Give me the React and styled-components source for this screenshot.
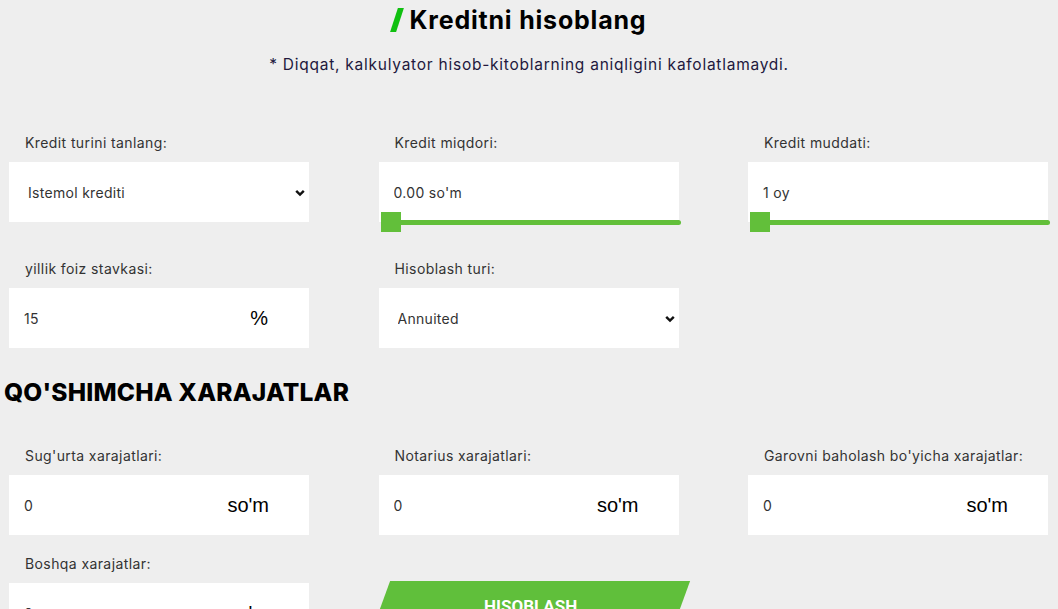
import React from "react";
import styled, { createGlobalStyle } from "styled-components";

const Global = createGlobalStyle`
  html, body { margin: 0; padding: 0; background: #eeeeee; }
  body { font-family: Inter, "Open Sans", "Noto Sans", sans-serif; color: #333; overflow: hidden; }
  * { box-sizing: border-box; }
`;

const Page = styled.div`
  width: 1058px;
  height: 609px;
  overflow: hidden;
  padding: 0 4px;
`;

const Header = styled.header`
  display: flex;
  flex-direction: column;
  align-items: center;
  padding-top: 4px;
`;

const Title = styled.h1`
  margin: 0 18px 0 0;
  display: flex;
  align-items: center;
  gap: 10px;
  font-size: 25px;
  line-height: 32px;
  font-weight: 700;
  letter-spacing: 0.8px;
  color: #000;
`;

const Slash = styled.span`
  display: inline-block;
  width: 6px;
  height: 24px;
  background: #10c010;
  transform: skewX(-18deg);
`;

const Note = styled.p`
  margin: 19px 0 0;
  font-size: 15.5px;
  line-height: 20px;
  letter-spacing: 0.75px;
  color: #22183d;
`;

const Grid = styled.div`
  display: grid;
  grid-template-columns: 300px 300px 300px;
  column-gap: 69.5px;
  row-gap: 19px;
  padding-left: 5px;
  margin-top: ${(p) => p.$top || 0}px;
`;

const Field = styled.div`
  display: flex;
  flex-direction: column;
`;

const Label = styled.label`
  display: block;
  padding-left: 16px;
  font-size: 14px;
  line-height: 20px;
  letter-spacing: 0.4px;
  margin-bottom: 9px;
  color: #333;
`;

const Box = styled.div`
  position: relative;
  height: 60px;
  background: #fff;
  display: flex;
  align-items: center;
`;

const TextInput = styled.input`
  flex: 1;
  min-width: 0;
  height: 100%;
  border: none;
  outline: none;
  background: transparent;
  padding: 0 0 0 15px;
  font-family: inherit;
  font-size: 14px;
  letter-spacing: 0.3px;
  color: #333;
`;

const Suffix = styled.span`
  font-family: "Liberation Sans", Arial, sans-serif;
  font-size: 20px;
  color: #000;
  margin-right: ${(p) => p.$right || 40}px;
`;

const Select = styled.select`
  appearance: none;
  -webkit-appearance: none;
  width: 100%;
  height: 100%;
  border: none;
  outline: none;
  background: transparent;
  padding: 0 0 0 19px;
  font-family: inherit;
  font-size: 14px;
  letter-spacing: 0.3px;
  color: #333;
`;

const Chevron = styled.svg`
  position: absolute;
  right: 4px;
  top: 27px;
  pointer-events: none;
`;

const Range = styled.input`
  -webkit-appearance: none;
  appearance: none;
  display: block;
  width: 300px;
  height: 20px;
  margin: -10px 0 8px 2px;
  background: transparent;
  position: relative;

  &::-webkit-slider-runnable-track {
    height: 5px;
    background: #62bf3a;
    border-radius: 3px;
  }
  &::-webkit-slider-thumb {
    -webkit-appearance: none;
    width: 20px;
    height: 20px;
    margin-top: -8px;
    background: #62bf3a;
    border: none;
    border-radius: 0;
  }
`;

const Heading = styled.h2`
  margin: 29px 0 0;
  font-size: 24.5px;
  line-height: 30px;
  font-weight: 800;
  color: #000;
  text-transform: uppercase;
  letter-spacing: 0.2px;
`;

const ButtonCell = styled.div`
  padding-top: 27px;
`;

const Button = styled.button`
  width: 300px;
  height: 50px;
  border: none;
  background: #60bf3b;
  color: #fff;
  font-family: Roboto, "Liberation Sans", sans-serif;
  font-weight: 700;
  font-size: 17px;
  text-transform: uppercase;
  transform: skewX(-20deg);
  margin-left: 2px;
  cursor: pointer;
`;

const ButtonText = styled.span`
  display: inline-block;
  transform: skewX(20deg);
`;

function ChevronIcon() {
  return (
    <Chevron width="10" height="8" viewBox="0 0 10 8">
      <path d="M1.2 1.8 L5 5.6 L8.8 1.8" fill="none" stroke="#111" strokeWidth="2.4" />
    </Chevron>
  );
}

function SelectField({ label, options }) {
  return (
    <Field>
      <Label>{label}</Label>
      <Box>
        <Select defaultValue={options[0]}>
          {options.map((o) => (
            <option key={o}>{o}</option>
          ))}
        </Select>
        <ChevronIcon />
      </Box>
    </Field>
  );
}

function SliderField({ label, value }) {
  return (
    <Field>
      <Label>{label}</Label>
      <Box>
        <TextInput defaultValue={value} />
      </Box>
      <Range type="range" min="0" max="100" defaultValue="0" />
    </Field>
  );
}

function SuffixField({ label, value, suffix, right }) {
  return (
    <Field>
      <Label>{label}</Label>
      <Box>
        <TextInput defaultValue={value} />
        <Suffix $right={right}>{suffix}</Suffix>
      </Box>
    </Field>
  );
}

export default function App() {
  return (
    <Page>
      <Global />
      <Header>
        <Title>
          <Slash />
          Kreditni hisoblang
        </Title>
        <Note>* Diqqat, kalkulyator hisob-kitoblarning aniqligini kafolatlamaydi.</Note>
      </Header>

      <Grid $top={58}>
        <SelectField label="Kredit turini tanlang:" options={["Istemol krediti", "Ipoteka", "Avtokredit"]} />
        <SliderField label="Kredit miqdori:" value="0.00 so'm" />
        <SliderField label="Kredit muddati:" value="1 oy" />
        <SuffixField label="yillik foiz stavkasi:" value="15" suffix="%" right={41} />
        <SelectField label="Hisoblash turi:" options={["Annuited", "Differensial"]} />
      </Grid>

      <Heading>QO'SHIMCHA XARAJATLAR</Heading>

      <Grid $top={39}>
        <SuffixField label="Sug'urta xarajatlari:" value="0" suffix="so'm" />
        <SuffixField label="Notarius xarajatlari:" value="0" suffix="so'm" />
        <SuffixField label="Garovni baholash bo'yicha xarajatlar:" value="0" suffix="so'm" />
        <SuffixField label="Boshqa xarajatlar:" value="0" suffix="so'm" />
        <ButtonCell>
          <Button>
            <ButtonText>Hisoblash</ButtonText>
          </Button>
        </ButtonCell>
      </Grid>
    </Page>
  );
}
